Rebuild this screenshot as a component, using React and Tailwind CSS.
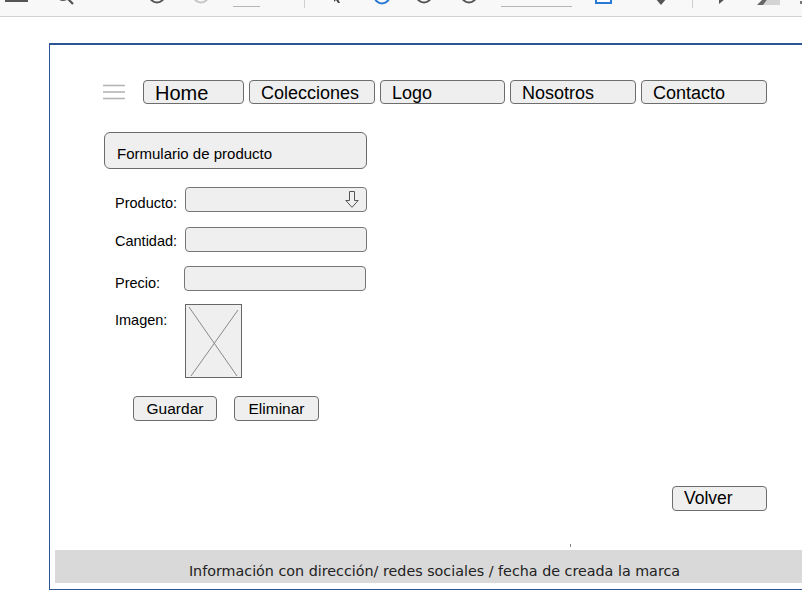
import React from "react";

const navItems = [
  { label: "Home", w: "w-[101px]", size: "text-[20px]" },
  { label: "Colecciones", w: "w-[126px]", size: "text-[18px]" },
  { label: "Logo", w: "w-[125px]", size: "text-[18px]" },
  { label: "Nosotros", w: "w-[126px]", size: "text-[18px]" },
  { label: "Contacto", w: "w-[126px]", size: "text-[18px]" },
];

const Circle = ({ color, className }) => (
  <svg width="18" height="18" viewBox="0 0 18 18" className={className}>
    <circle cx="9" cy="9" r="7.5" fill="none" stroke={color} strokeWidth="2" />
  </svg>
);

const Toolbar = () => (
  <div className="flex items-end h-[17px] overflow-hidden bg-[#f8f8f8] border-b border-[#d2d2d2]">
    <span className="shrink-0 ml-[5px] mb-[14px] w-[23px] h-[2px] bg-[#555]" />
    <svg width="20" height="20" viewBox="0 0 20 20" className="shrink-0 ml-[27px] mb-[10px]">
      <circle cx="8" cy="8" r="6" fill="none" stroke="#555" strokeWidth="2" />
      <line x1="12.5" y1="12.5" x2="18" y2="18" stroke="#555" strokeWidth="2.2" />
    </svg>
    <Circle color="#555" className="shrink-0 ml-[73px] mb-[12px]" />
    <Circle color="#c4c4c4" className="shrink-0 ml-[26px] mb-[12px]" />
    <span className="shrink-0 ml-[23px] mb-[9px] w-[27px] h-[1px] bg-[#b5b5b5]" />
    <span className="shrink-0 ml-[44px] mb-[8px] w-[1px] h-[9px] bg-[#cfcfcf]" />
    <svg width="10" height="12" viewBox="0 0 10 12" className="shrink-0 ml-[28px] mb-[13px]">
      <path d="M1 0 L9 8 L5 8 L7 12 L5 12 L3 9 L1 11 Z" fill="#444" />
    </svg>
    <Circle color="#2a79d3" className="shrink-0 ml-[30px] mb-[11px]" />
    <Circle color="#555" className="shrink-0 ml-[24px] mb-[12px]" />
    <Circle color="#555" className="shrink-0 ml-[27px] mb-[12px]" />
    <span className="shrink-0 ml-[23px] mb-[9px] w-[71px] h-[1px] bg-[#b5b5b5]" />
    <span className="shrink-0 ml-[23px] mb-[12px] w-[17px] h-[14px] border-2 border-[#2a79d3] bg-white" />
    <svg width="12" height="12" viewBox="0 0 12 12" className="shrink-0 ml-[43px] mb-[11px]">
      <path d="M4 0 L8 0 L8 5 L12 5 L6 12 L0 5 L4 5 Z" fill="#555" />
    </svg>
    <span className="shrink-0 ml-[25px] mb-[8px] w-[1px] h-[9px] bg-[#cfcfcf]" />
    <svg width="6" height="10" viewBox="0 0 6 10" className="shrink-0 ml-[26px] mb-[12px]">
      <path d="M0 0 L6 5 L0 10 Z" fill="#555" />
    </svg>
    <svg width="23" height="10" viewBox="0 0 23 10" className="shrink-0 ml-[32px] mb-[11px]">
      <rect x="6" y="0" width="17" height="10" fill="#d4d4d4" />
      <path d="M0 10 L8 2 L12 2 L6 10 Z" fill="#666" />
    </svg>
    <span className="shrink-0 ml-[20px] mb-[12px] w-[2px] h-[3px] bg-[#777]" />
  </div>
);

const Field = ({ label, pt, labelW = "w-[70px]", mt, children }) => (
  <div className={`flex items-start ${mt}`}>
    <span className={`shrink-0 ${labelW} ${pt} text-[14.5px] leading-none text-black`}>
      {label}
    </span>
    {children}
  </div>
);

const InputBox = ({ children }) => (
  <div className="w-[182px] h-[25px] rounded-[4px] border border-[#767676] bg-[#efefef] flex items-center justify-end pr-[7px]">
    {children}
  </div>
);

export default function App() {
  return (
    <div className="w-[802px] h-[616px] overflow-hidden bg-white font-['Liberation_Sans',Arial,sans-serif] text-black">
      <Toolbar />

      <div className="ml-[49px] mt-[26px] w-[770px] border-t-2 border-l border-b border-[#2d5596] pb-[6px]">
        {/* Nav */}
        <div className="flex items-center pl-[53px] pt-[35px]">
          <svg width="22" height="16" viewBox="0 0 22 16" className="shrink-0">
            <line x1="0" y1="1.5" x2="22" y2="1.5" stroke="#b4b4b4" strokeWidth="1.6" />
            <line x1="0" y1="8" x2="22" y2="8" stroke="#b4b4b4" strokeWidth="1.6" />
            <line x1="0" y1="14.5" x2="22" y2="14.5" stroke="#b4b4b4" strokeWidth="1.6" />
          </svg>
          <div className="flex gap-[5px] ml-[18px]">
            {navItems.map((item) => (
              <div
                key={item.label}
                className={`${item.w} h-[24px] rounded-[4px] border border-[#6d6d6d] bg-[#efefef] pl-[11px] pt-[2px] flex items-center leading-none ${item.size}`}
              >
                {item.label}
              </div>
            ))}
          </div>
        </div>

        {/* Form title */}
        <div className="ml-[54px] mt-[28px] w-[263px] h-[37px] rounded-[6px] border border-[#6b6b6b] bg-[#efefef] pl-[12px] pt-[5px] flex items-center text-[15px] leading-none">
          Formulario de producto
        </div>

        {/* Fields */}
        <div className="ml-[65px]">
          <Field label="Producto:" pt="pt-[9px]" mt="mt-[18px]">
            <InputBox>
              <svg width="14" height="17" viewBox="0 0 14 17">
                <path
                  d="M4.5 0.5 L9.5 0.5 L9.5 9.5 L13.2 9.5 L7 16.3 L0.8 9.5 L4.5 9.5 Z"
                  fill="none"
                  stroke="#555"
                  strokeWidth="1"
                />
              </svg>
            </InputBox>
          </Field>
          <Field label="Cantidad:" pt="pt-[7px]" mt="mt-[15px]">
            <InputBox />
          </Field>
          <Field label="Precio:" pt="pt-[10px]" labelW="w-[69px]" mt="mt-[14px]">
            <InputBox />
          </Field>
          <Field label="Imagen:" pt="pt-[9px]" mt="mt-[13px]">
            <div className="w-[57px] h-[74px] border border-[#666] bg-[#efefef]">
              <svg width="55" height="72" viewBox="0 0 55 72">
                <line x1="3" y1="2" x2="51" y2="71" stroke="#8a8a8a" strokeWidth="1" />
                <line x1="52" y1="5" x2="5" y2="71" stroke="#8a8a8a" strokeWidth="1" />
              </svg>
            </div>
          </Field>
        </div>

        {/* Actions */}
        <div className="flex ml-[83px] mt-[18px]">
          <button className="w-[84px] h-[25px] rounded-[4px] border border-[#6d6d6d] bg-[#efefef] text-[15.5px] leading-none">
            Guardar
          </button>
          <button className="ml-[17px] w-[85px] h-[25px] rounded-[4px] border border-[#6d6d6d] bg-[#efefef] text-[15.5px] leading-none">
            Eliminar
          </button>
        </div>

        <div className="ml-[622px] mt-[65px] w-[95px] h-[25px] rounded-[4px] border border-[#6d6d6d] bg-[#efefef] pl-[11px] flex items-center text-[17.5px] leading-none">
          Volver
        </div>

        <div className="ml-[520px] mt-[33px] w-[1px] h-[3px] bg-[#888]" />

        {/* Footer */}
        <div className="mx-[5px] mt-[3px] h-[33px] bg-[#d9d9d9] flex items-center justify-center pt-[10px] font-['DejaVu_Sans',Verdana,sans-serif] text-[14.3px] text-[#222]">
          Información con dirección/ redes sociales / fecha de creada la marca
        </div>
      </div>
    </div>
  );
}
